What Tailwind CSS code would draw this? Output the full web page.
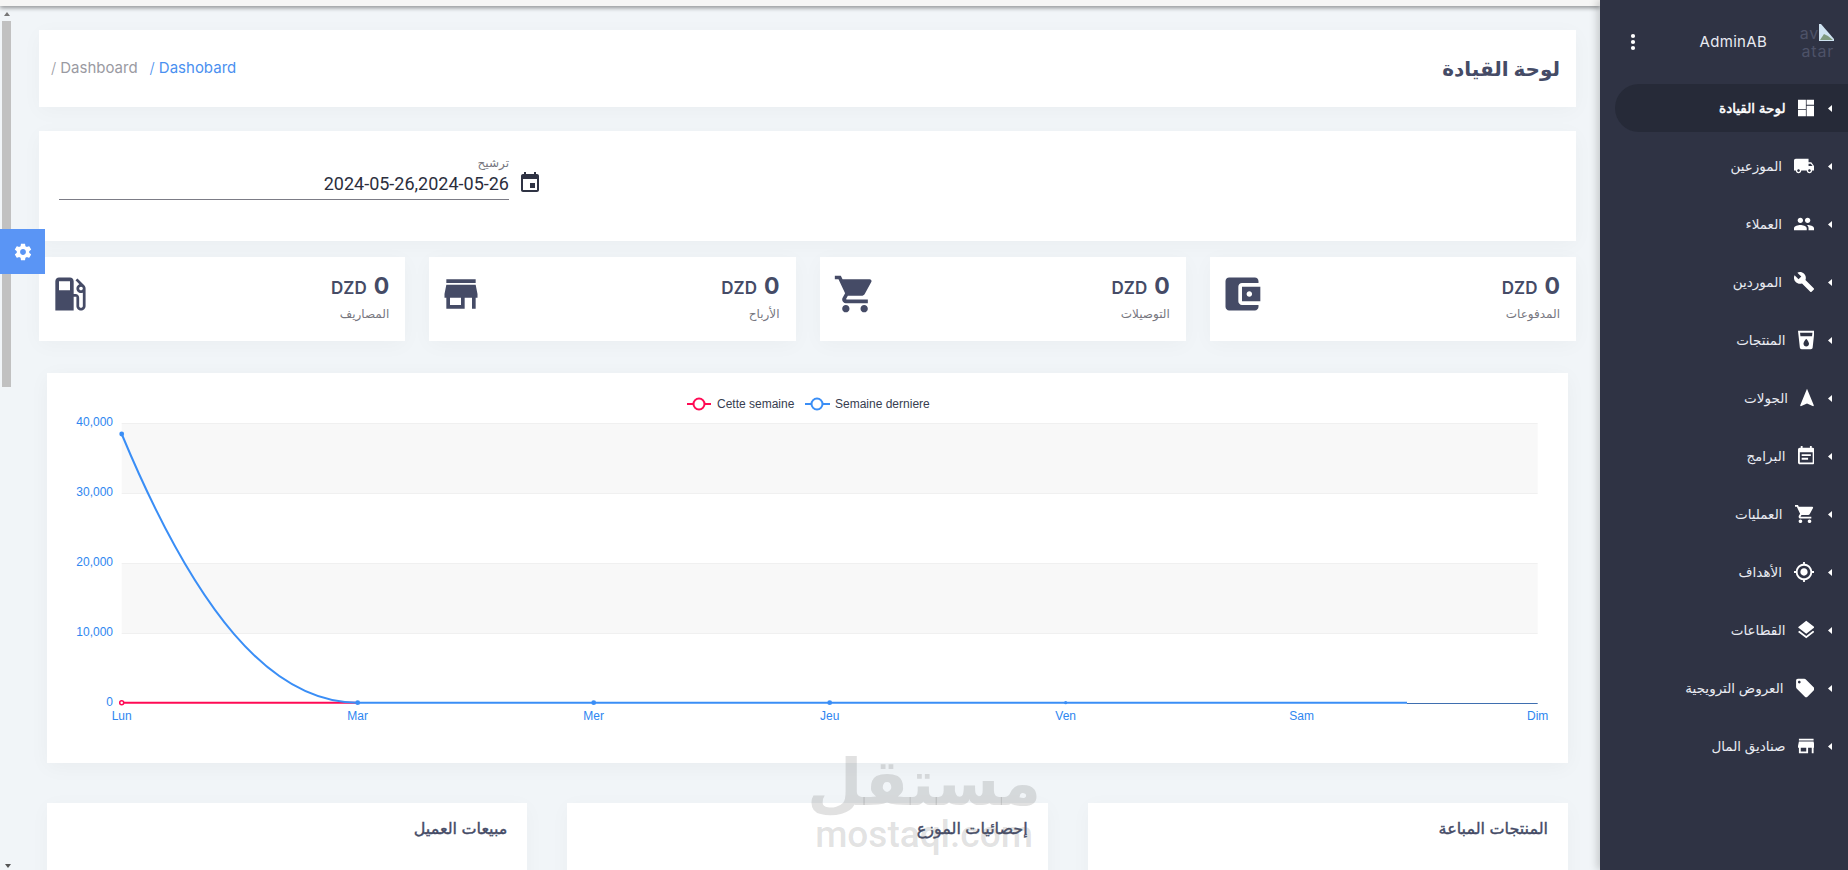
<!DOCTYPE html>
<html lang="ar" dir="rtl">
<head>
    <meta charset="UTF-8">
    <meta name="viewport" content="width=device-width, initial-scale=1.0">
    <title>لوحة القيادة</title>
    <script src="https://cdn.jsdelivr.net/npm/@tailwindcss/browser@4"></script>
</head>
<body class="bg-[#f1f5f8] h-screen overflow-hidden flex font-['Inter','DejaVu_Sans',sans-serif] relative">
    <!-- Sidebar -->
    <aside class="w-[248px] shrink-0 h-full bg-[#2f3344] text-[#e9ebf2] shadow-[-3px_0_8px_rgba(0,0,0,0.18)] z-10">
        <div class="h-[84px] flex items-center pr-[14px] pl-[30px] gap-[31px]">
            <div class="w-[36px] h-[36px] text-[16px] leading-[18px] tracking-[0.8px] text-[#4d5268] break-all -mt-[1px]">
                <svg class="inline-block align-top" width="15" height="17" viewBox="0 0 15 17"><path d="M0 0h2l13 15v2H0z" fill="#cfe3f1"/><path d="M1 16l4-6 4 2 5 4z" fill="#7f9a7f"/></svg>avatar
            </div>
            <span class="text-[15px] tracking-[0.3px] text-[#e9ebf2]" dir="ltr">AdminAB</span>
            <svg class="mr-auto" width="6" height="18" viewBox="0 0 6 18" fill="#fff"><circle cx="3" cy="3" r="2.1"/><circle cx="3" cy="9" r="2.1"/><circle cx="3" cy="15" r="2.1"/></svg>
        </div>
        <nav class="pl-[15px] flex flex-col gap-[10px] text-[13.5px]">
            <a class="h-[48px] flex items-center pr-[16px] rounded-l-full bg-[#262a38] text-white [-webkit-text-stroke:0.5px_white]">
                <svg class="shrink-0" width="4" height="7" viewBox="0 0 4 7" fill="#fff"><path d="M4 0v7L0 3.5z"/></svg>
                <svg class="shrink-0 mr-[14px] ml-[12px] w-[16.5px] h-[22px]" viewBox="3 0 18 24" fill="#fff"><path d="M3 3h8.6v10H3zm0 11h8.6v7H3zm9.4-11H21v5.5h-8.6zm0 6.5H21V21h-8.6z"/></svg>
                <span>لوحة القيادة</span>
            </a>
            <a class="h-[48px] flex items-center pr-[16px]">
                <svg class="shrink-0" width="4" height="7" viewBox="0 0 4 7" fill="#fff"><path d="M4 0v7L0 3.5z"/></svg>
                <svg class="shrink-0 mr-[14px] ml-[12px] w-[20px] h-[22px]" viewBox="1 0 22 24" fill="#fff"><path d="M20 8h-3V4H3c-1.1 0-2 .9-2 2v11h2c0 1.66 1.34 3 3 3s3-1.34 3-3h6c0 1.66 1.34 3 3 3s3-1.34 3-3h2v-5l-3-4zM6 18.5c-.83 0-1.5-.67-1.5-1.5s.67-1.5 1.5-1.5 1.5.67 1.5 1.5-.67 1.5-1.5 1.5zm13.5-9l1.96 2.5H17V9.5h2.5zm-1.5 9c-.83 0-1.5-.67-1.5-1.5s.67-1.5 1.5-1.5 1.5.67 1.5 1.5-.67 1.5-1.5 1.5z"/></svg>
                <span>الموزعين</span>
            </a>
            <a class="h-[48px] flex items-center pr-[16px]">
                <svg class="shrink-0" width="4" height="7" viewBox="0 0 4 7" fill="#fff"><path d="M4 0v7L0 3.5z"/></svg>
                <svg class="shrink-0 mr-[14px] ml-[12px] w-[20px] h-[22px]" viewBox="1 0 22 24" fill="#fff"><path d="M16 11c1.66 0 2.99-1.34 2.99-3S17.66 5 16 5c-1.66 0-3 1.34-3 3s1.34 3 3 3zm-8 0c1.66 0 2.99-1.34 2.99-3S9.66 5 8 5C6.34 5 5 6.34 5 8s1.34 3 3 3zm0 2c-2.33 0-7 1.17-7 3.5V19h14v-2.5c0-2.33-4.67-3.5-7-3.5zm8 0c-.29 0-.62.02-.97.05 1.16.84 1.97 1.97 1.97 3.45V19h6v-2.5c0-2.33-4.67-3.5-7-3.5z"/></svg>
                <span>العملاء</span>
            </a>
            <a class="h-[48px] flex items-center pr-[16px]">
                <svg class="shrink-0" width="4" height="7" viewBox="0 0 4 7" fill="#fff"><path d="M4 0v7L0 3.5z"/></svg>
                <svg class="shrink-0 mr-[14px] ml-[12px] w-[20px] h-[22px]" viewBox="1 0 22 24" fill="#fff"><path d="M22.7 19l-9.1-9.1c.9-2.3.4-5-1.5-6.9-2-2-5-2.4-7.4-1.3L9 6 6 9 1.6 4.7C.4 7.1.9 10.1 2.9 12.1c1.9 1.9 4.6 2.4 6.9 1.5l9.1 9.1c.4.4 1 .4 1.4 0l2.3-2.3c.5-.4.5-1.1.1-1.4z"/></svg>
                <span>الموردين</span>
            </a>
            <a class="h-[48px] flex items-center pr-[16px]">
                <svg class="shrink-0" width="4" height="7" viewBox="0 0 4 7" fill="#fff"><path d="M4 0v7L0 3.5z"/></svg>
                <svg class="shrink-0 mr-[14px] ml-[12px] w-[16.5px] h-[22px]" viewBox="3 0 18 24" fill="#fff"><path d="M3 2l2.01 18.23C5.13 21.23 5.97 22 7 22h10c1.03 0 1.87-.77 1.99-1.77L21 2H3zm9 17c-1.66 0-3-1.34-3-3 0-2 3-5.4 3-5.4s3 3.4 3 5.4c0 1.66-1.34 3-3 3zm6.33-11H5.67l-.44-4h13.53l-.43 4z"/></svg>
                <span>المنتجات</span>
            </a>
            <a class="h-[48px] flex items-center pr-[16px]">
                <svg class="shrink-0" width="4" height="7" viewBox="0 0 4 7" fill="#fff"><path d="M4 0v7L0 3.5z"/></svg>
                <svg class="shrink-0 mr-[14px] ml-[12px] w-[14px] h-[22px]" viewBox="4.5 0 15 24" fill="#fff"><path d="M12 2L4.5 20.29l.71.71L12 18l6.79 3 .71-.71z"/></svg>
                <span>الجولات</span>
            </a>
            <a class="h-[48px] flex items-center pr-[16px]">
                <svg class="shrink-0" width="4" height="7" viewBox="0 0 4 7" fill="#fff"><path d="M4 0v7L0 3.5z"/></svg>
                <svg class="shrink-0 mr-[14px] ml-[12px] w-[16.5px] h-[22px]" viewBox="3 0 18 24" fill="#fff"><path d="M17 10H7v2h10v-2zm2-7h-1V1h-2v2H8V1H6v2H5c-1.11 0-1.99.9-1.99 2L3 19c0 1.1.89 2 2 2h14c1.1 0 2-.9 2-2V5c0-1.1-.9-2-2-2zm0 16H5V8h14v11zm-5-5H7v2h7v-2z"/></svg>
                <span>البرامج</span>
            </a>
            <a class="h-[48px] flex items-center pr-[16px]">
                <svg class="shrink-0" width="4" height="7" viewBox="0 0 4 7" fill="#fff"><path d="M4 0v7L0 3.5z"/></svg>
                <svg class="shrink-0 mr-[14px] ml-[12px] w-[19.5px] h-[22px]" viewBox="1 0 21.5 24" fill="#fff"><path d="M7 18c-1.1 0-1.99.9-1.99 2S5.9 22 7 22s2-.9 2-2-.9-2-2-2zM1 2v2h2l3.6 7.59-1.35 2.45c-.16.28-.25.61-.25.96 0 1.1.9 2 2 2h12v-2H7.42c-.14 0-.25-.11-.25-.25l.03-.12.9-1.63h7.45c.75 0 1.41-.41 1.75-1.03l3.58-6.49c.08-.14.12-.31.12-.48 0-.55-.45-1-1-1H5.21l-.94-2H1zm16 16c-1.1 0-1.99.9-1.99 2s.89 2 1.99 2 2-.9 2-2-.9-2-2-2z"/></svg>
                <span>العمليات</span>
            </a>
            <a class="h-[48px] flex items-center pr-[16px]">
                <svg class="shrink-0" width="4" height="7" viewBox="0 0 4 7" fill="#fff"><path d="M4 0v7L0 3.5z"/></svg>
                <svg class="shrink-0 mr-[14px] ml-[12px] w-[20px] h-[22px]" viewBox="1 0 22 24" fill="#fff"><path d="M12 8c-2.21 0-4 1.79-4 4s1.79 4 4 4 4-1.79 4-4-1.79-4-4-4zm8.94 3c-.46-4.17-3.77-7.48-7.94-7.94V1h-2v2.06C6.83 3.52 3.52 6.83 3.06 11H1v2h2.06c.46 4.17 3.77 7.48 7.94 7.94V23h2v-2.06c4.17-.46 7.48-3.77 7.94-7.94H23v-2h-2.06zM12 19c-3.87 0-7-3.13-7-7s3.13-7 7-7 7 3.13 7 7-3.13 7-7 7z"/></svg>
                <span>الأهداف</span>
            </a>
            <a class="h-[48px] flex items-center pr-[16px]">
                <svg class="shrink-0" width="4" height="7" viewBox="0 0 4 7" fill="#fff"><path d="M4 0v7L0 3.5z"/></svg>
                <svg class="shrink-0 mr-[14px] ml-[12px] w-[16.5px] h-[22px]" viewBox="3 0 18 24" fill="#fff"><path d="M11.99 18.54l-7.37-5.73L3 14.07l9 7 9-7-1.63-1.27-7.38 5.74zM12 16l7.36-5.73L21 9l-9-7-9 7 1.63 1.27L12 16z"/></svg>
                <span>القطاعات</span>
            </a>
            <a class="h-[48px] flex items-center pr-[16px]">
                <svg class="shrink-0" width="4" height="7" viewBox="0 0 4 7" fill="#fff"><path d="M4 0v7L0 3.5z"/></svg>
                <svg class="shrink-0 mr-[14px] ml-[12px] w-[18.5px] h-[22px]" viewBox="2 0 20 24" fill="#fff"><path d="M21.41 11.58l-9-9C12.05 2.22 11.55 2 11 2H4c-1.1 0-2 .9-2 2v7c0 .55.22 1.05.59 1.42l9 9c.36.36.86.58 1.41.58.55 0 1.05-.22 1.41-.59l7-7c.37-.36.59-.86.59-1.41 0-.55-.23-1.06-.59-1.42zM5.5 7C4.67 7 4 6.33 4 5.5S4.67 4 5.5 4 7 4.67 7 5.5 6.33 7 5.5 7z"/></svg>
                <span>العروض الترويجية</span>
            </a>
            <a class="h-[48px] flex items-center pr-[16px]">
                <svg class="shrink-0" width="4" height="7" viewBox="0 0 4 7" fill="#fff"><path d="M4 0v7L0 3.5z"/></svg>
                <svg class="shrink-0 mr-[14px] ml-[12px] w-[16.5px] h-[22px]" viewBox="3 0 18 24" fill="#fff"><path d="M20 4H4v2h16V4zm1 10v-2l-1-5H4l-1 5v2h1v6h10v-6h4v6h2v-6h1zm-9 4H6v-4h6v4z"/></svg>
                <span>صناديق المال</span>
            </a>
        </nav>
    </aside>

    <!-- Main -->
    <main class="flex-1 min-w-0 h-full overflow-hidden">
        <div class="h-[6px] bg-[#f6f6f5] shadow-[0_2px_4px_rgba(0,0,0,0.4)]"></div>
        <div class="pt-[24px] pr-[24px] pl-[39px]">
            <!-- Page title -->
            <div class="h-[77px] bg-white shadow-[0_4px_20px_rgba(0,0,0,0.03)] flex items-center justify-between pr-[16px] pl-[12px]">
                <h1 class="text-[20px] font-bold text-[#454b66]">لوحة القيادة</h1>
                <div class="flex items-center text-[15px]" dir="ltr">
                    <span class="text-[#9a9aa2] mr-[12px]"><span class="font-light mr-[4px]">/</span>Dashboard</span>
                    <span class="text-[#4a90f0]"><span class="font-light mr-[4px]">/</span>Dashobard</span>
                </div>
            </div>

            <!-- Filter -->
            <div class="h-[110px] mt-[24px] bg-white shadow-[0_4px_20px_rgba(0,0,0,0.03)] pt-[23px] pl-[20px]" dir="ltr">
                <div class="flex items-start">
                    <div class="w-[450px] h-[46px] border-b border-[#7c7c86] text-right" dir="rtl">
                        <div class="text-[12px] leading-[18px] text-[#77777f]">ترشيح</div>
                        <div class="text-[18px] leading-[24px] text-[#2b2e3d] font-['Roboto',sans-serif]" dir="ltr">2024-05-26,2024-05-26</div>
                    </div>
                    <svg class="ml-[9px] mt-[17px]" width="24" height="24" viewBox="0 0 24 24" fill="#2f3344"><path d="M17 12h-5v5h5v-5zM16 1v2H8V1H6v2H5c-1.11 0-1.99.9-1.99 2L3 19c0 1.1.89 2 2 2h14c1.1 0 2-.9 2-2V5c0-1.1-.9-2-2-2h-1V1h-2zm3 18H5V8h14v11z"/></svg>
                </div>
            </div>

            <!-- Stats -->
            <div class="grid grid-cols-4 gap-[24px] mt-[16px]">
                <div class="h-[84px] bg-white shadow-[0_4px_20px_rgba(0,0,0,0.03)] flex justify-between pr-[16px] pl-[10px] pt-[15px]">
                    <div>
                        <div class="flex items-baseline gap-[7px] text-[#454b66] font-bold h-[28px]"><span class="text-[23px] leading-[28px]">0</span><span class="text-[17px] font-semibold" dir="ltr">DZD</span></div>
                        <div class="text-[12px] leading-[18px] text-[#77777f] mt-[5px]">المدفوعات</div>
                    </div>
                    <svg width="44" height="44" viewBox="0 0 24 24" fill="#454b66"><path d="M21 18v1c0 1.1-.9 2-2 2H5c-1.11 0-2-.9-2-2V5c0-1.1.89-2 2-2h14c1.1 0 2 .9 2 2v1h-9c-1.11 0-2 .9-2 2v8c0 1.1.89 2 2 2h9zm-9-2h10V8H12v8zm4-2.5c-.83 0-1.5-.67-1.5-1.5s.67-1.5 1.5-1.5 1.5.67 1.5 1.5-.67 1.5-1.5 1.5z"/></svg>
                </div>
                <div class="h-[84px] bg-white shadow-[0_4px_20px_rgba(0,0,0,0.03)] flex justify-between pr-[16px] pl-[13px] pt-[15px]">
                    <div>
                        <div class="flex items-baseline gap-[7px] text-[#454b66] font-bold h-[28px]"><span class="text-[23px] leading-[28px]">0</span><span class="text-[17px] font-semibold" dir="ltr">DZD</span></div>
                        <div class="text-[12px] leading-[18px] text-[#77777f] mt-[5px]">التوصيلات</div>
                    </div>
                    <svg width="44" height="44" viewBox="0 0 24 24" fill="#454b66"><path d="M7 18c-1.1 0-1.99.9-1.99 2S5.9 22 7 22s2-.9 2-2-.9-2-2-2zM1 2v2h2l3.6 7.59-1.35 2.45c-.16.28-.25.61-.25.96 0 1.1.9 2 2 2h12v-2H7.42c-.14 0-.25-.11-.25-.25l.03-.12.9-1.63h7.45c.75 0 1.41-.41 1.75-1.03l3.58-6.49c.08-.14.12-.31.12-.48 0-.55-.45-1-1-1H5.21l-.94-2H1zm16 16c-1.1 0-1.99.9-1.99 2s.89 2 1.99 2 2-.9 2-2-.9-2-2-2z"/></svg>
                </div>
                <div class="h-[84px] bg-white shadow-[0_4px_20px_rgba(0,0,0,0.03)] flex justify-between pr-[16px] pl-[10px] pt-[15px]">
                    <div>
                        <div class="flex items-baseline gap-[7px] text-[#454b66] font-bold h-[28px]"><span class="text-[23px] leading-[28px]">0</span><span class="text-[17px] font-semibold" dir="ltr">DZD</span></div>
                        <div class="text-[12px] leading-[18px] text-[#77777f] mt-[5px]">الأرباح</div>
                    </div>
                    <svg width="44" height="44" viewBox="0 0 24 24" fill="#454b66"><path d="M20 4H4v2h16V4zm1 10v-2l-1-5H4l-1 5v2h1v6h10v-6h4v6h2v-6h1zm-9 4H6v-4h6v4z"/></svg>
                </div>
                <div class="h-[84px] bg-white shadow-[0_4px_20px_rgba(0,0,0,0.03)] flex justify-between pr-[16px] pl-[9px] pt-[15px]">
                    <div>
                        <div class="flex items-baseline gap-[7px] text-[#454b66] font-bold h-[28px]"><span class="text-[23px] leading-[28px]">0</span><span class="text-[17px] font-semibold" dir="ltr">DZD</span></div>
                        <div class="text-[12px] leading-[18px] text-[#77777f] mt-[5px]">المصاريف</div>
                    </div>
                    <svg width="44" height="44" viewBox="0 0 24 24" fill="#454b66"><path d="M19.77 7.23l.01-.01-3.72-3.72L15 4.56l2.11 2.11c-.94.36-1.61 1.26-1.61 2.33 0 1.38 1.12 2.5 2.5 2.5.36 0 .69-.08 1-.21v7.21c0 .55-.45 1-1 1s-1-.45-1-1V14c0-1.1-.9-2-2-2h-1V5c0-1.1-.9-2-2-2H6c-1.1 0-2 .9-2 2v16h10v-7.5h1.5v5c0 1.38 1.12 2.5 2.5 2.5s2.5-1.12 2.5-2.5V9c0-.69-.28-1.32-.73-1.77zM12 10H6V5h6v5zm6 0c-.55 0-1-.45-1-1s.45-1 1-1 1 .45 1 1-.45 1-1 1z"/></svg>
                </div>
            </div>

            <!-- Chart -->
            <div class="h-[390px] mt-[32px] mr-[8px] ml-[8px] bg-white shadow-[0_4px_20px_rgba(0,0,0,0.04)]" dir="ltr">
                <svg class="block font-['Liberation_Sans',sans-serif] text-[12px]" width="1521" height="390" viewBox="0 0 1521 390">
                    <rect x="74.7" y="50.5" width="1416" height="70" fill="#f8f8f8"/>
                    <rect x="74.7" y="190.5" width="1416" height="70" fill="#f8f8f8"/>
                    <g stroke="#f0f0f0" stroke-width="1">
                        <line x1="74.7" x2="1490.7" y1="50.5" y2="50.5"/>
                        <line x1="74.7" x2="1490.7" y1="120.5" y2="120.5"/>
                        <line x1="74.7" x2="1490.7" y1="190.5" y2="190.5"/>
                        <line x1="74.7" x2="1490.7" y1="260.5" y2="260.5"/>
                    </g>
                    <!-- legend -->
                    <line x1="640" x2="664" y1="31" y2="31" stroke="#ff0a54" stroke-width="2"/>
                    <circle cx="652" cy="31" r="5.5" fill="#fff" stroke="#ff0a54" stroke-width="2"/>
                    <text x="670" y="35" fill="#373d50">Cette semaine</text>
                    <line x1="758" x2="783" y1="31" y2="31" stroke="#3a8ef6" stroke-width="2"/>
                    <circle cx="770" cy="31" r="5.5" fill="#fff" stroke="#3a8ef6" stroke-width="2"/>
                    <text x="788" y="35" fill="#373d50">Semaine derniere</text>
                    <!-- axes -->
                    <g fill="#2e86f0" text-anchor="end">
                        <text x="66" y="53">40,000</text>
                        <text x="66" y="123">30,000</text>
                        <text x="66" y="193">20,000</text>
                        <text x="66" y="263">10,000</text>
                        <text x="66" y="333">0</text>
                    </g>
                    <g fill="#2e86f0" text-anchor="middle">
                        <text x="74.7" y="347">Lun</text>
                        <text x="310.7" y="347">Mar</text>
                        <text x="546.7" y="347">Mer</text>
                        <text x="782.7" y="347">Jeu</text>
                        <text x="1018.7" y="347">Ven</text>
                        <text x="1254.7" y="347">Sam</text>
                        <text x="1490.7" y="347">Dim</text>
                    </g>
                    <!-- series -->
                    <line x1="74.7" x2="310.7" y1="329.7" y2="329.7" stroke="#ff0a54" stroke-width="2"/>
                    <circle cx="74.7" cy="329.7" r="2" fill="#fff" stroke="#ff0a54" stroke-width="1.5"/>
                    <path d="M74.7 61C148 237 223 329.7 310.7 329.7" fill="none" stroke="#3a8ef6" stroke-width="2"/>
                    <line x1="310.7" x2="1360" y1="329.7" y2="329.7" stroke="#3a8ef6" stroke-width="2"/>
                    <line x1="1360" x2="1490.7" y1="330.5" y2="330.5" stroke="#3f6fb0" stroke-width="1"/>
                    <g fill="#3a8ef6">
                        <circle cx="74.7" cy="61" r="2.4"/>
                        <circle cx="310.7" cy="329.7" r="2.4"/>
                        <circle cx="546.7" cy="329.7" r="2.4"/>
                        <circle cx="782.7" cy="329.7" r="2.4"/>
                        <circle cx="1018.7" cy="329.7" r="1.6"/>
                    </g>
                </svg>
            </div>

            <!-- Bottom cards -->
            <div class="grid grid-cols-3 gap-[40px] mt-[40px] mr-[8px] ml-[8px]">
                <div class="h-[200px] bg-white shadow-[0_4px_20px_rgba(0,0,0,0.03)] pt-[12px] pr-[20px]"><h3 class="text-[16px] leading-[26px] text-[#454b66] [-webkit-text-stroke:0.4px_#454b66]">المنتجات المباعة</h3></div>
                <div class="h-[200px] bg-white shadow-[0_4px_20px_rgba(0,0,0,0.03)] pt-[12px] pr-[20px]"><h3 class="text-[16px] leading-[26px] text-[#454b66] [-webkit-text-stroke:0.4px_#454b66]">إحصائيات الموزع</h3></div>
                <div class="h-[200px] bg-white shadow-[0_4px_20px_rgba(0,0,0,0.03)] pt-[12px] pr-[20px]"><h3 class="text-[16px] leading-[26px] text-[#454b66] [-webkit-text-stroke:0.4px_#454b66]">مبيعات العميل</h3></div>
            </div>
        </div>
    </main>

    <!-- Scrollbar -->
    <div class="absolute left-[2px] top-[21px] w-[9px] h-[366px] bg-[#c1c1c1]"></div>
    <svg class="absolute left-[4px] top-[12px]" width="6" height="4" viewBox="0 0 6 4" fill="#777"><path d="M3 0l3 4H0z"/></svg>
    <svg class="absolute left-[5px] top-[864px]" width="6" height="4" viewBox="0 0 6 4" fill="#555"><path d="M3 4L0 0h6z"/></svg>

    <!-- Settings tab -->
    <div class="absolute left-0 top-[229px] w-[45px] h-[45px] bg-[#5a95f5] flex items-center justify-center">
        <svg width="20" height="20" viewBox="0 0 24 24" fill="#fff"><path d="M19.43 12.98c.04-.32.07-.64.07-.98s-.03-.66-.07-.98l2.11-1.65c.19-.15.24-.42.12-.64l-2-3.46c-.12-.22-.39-.3-.61-.22l-2.49 1c-.52-.4-1.08-.73-1.69-.98l-.38-2.65C14.46 2.18 14.25 2 14 2h-4c-.25 0-.46.18-.49.42l-.38 2.65c-.61.25-1.17.59-1.69.98l-2.49-1c-.23-.09-.49 0-.61.22l-2 3.46c-.13.22-.07.49.12.64l2.11 1.65c-.04.32-.07.65-.07.98s.03.66.07.98l-2.11 1.65c-.19.15-.24.42-.12.64l2 3.46c.12.22.39.3.61.22l2.49-1c.52.4 1.08.73 1.69.98l.38 2.65c.03.24.24.42.49.42h4c.25 0 .46-.18.49-.42l.38-2.65c.61-.25 1.17-.59 1.69-.98l2.49 1c.23.09.49 0 .61-.22l2-3.46c.12-.22.07-.49-.12-.64l-2.11-1.65zM12 15.5c-1.93 0-3.5-1.57-3.5-3.5s1.57-3.5 3.5-3.5 3.5 1.57 3.5 3.5-1.57 3.5-3.5 3.5z"/></svg>
    </div>

    <!-- Watermark -->
    <div class="absolute left-[804px] top-[744px] w-[240px] text-center text-[#6b6b6b]/20 pointer-events-none">
        <div class="text-[64px] leading-[76px] font-bold">مستقل</div>
        <div class="text-[37px] leading-[30px] font-medium font-['Roboto',sans-serif]" dir="ltr">mostaql.com</div>
    </div>
</body>
</html>
